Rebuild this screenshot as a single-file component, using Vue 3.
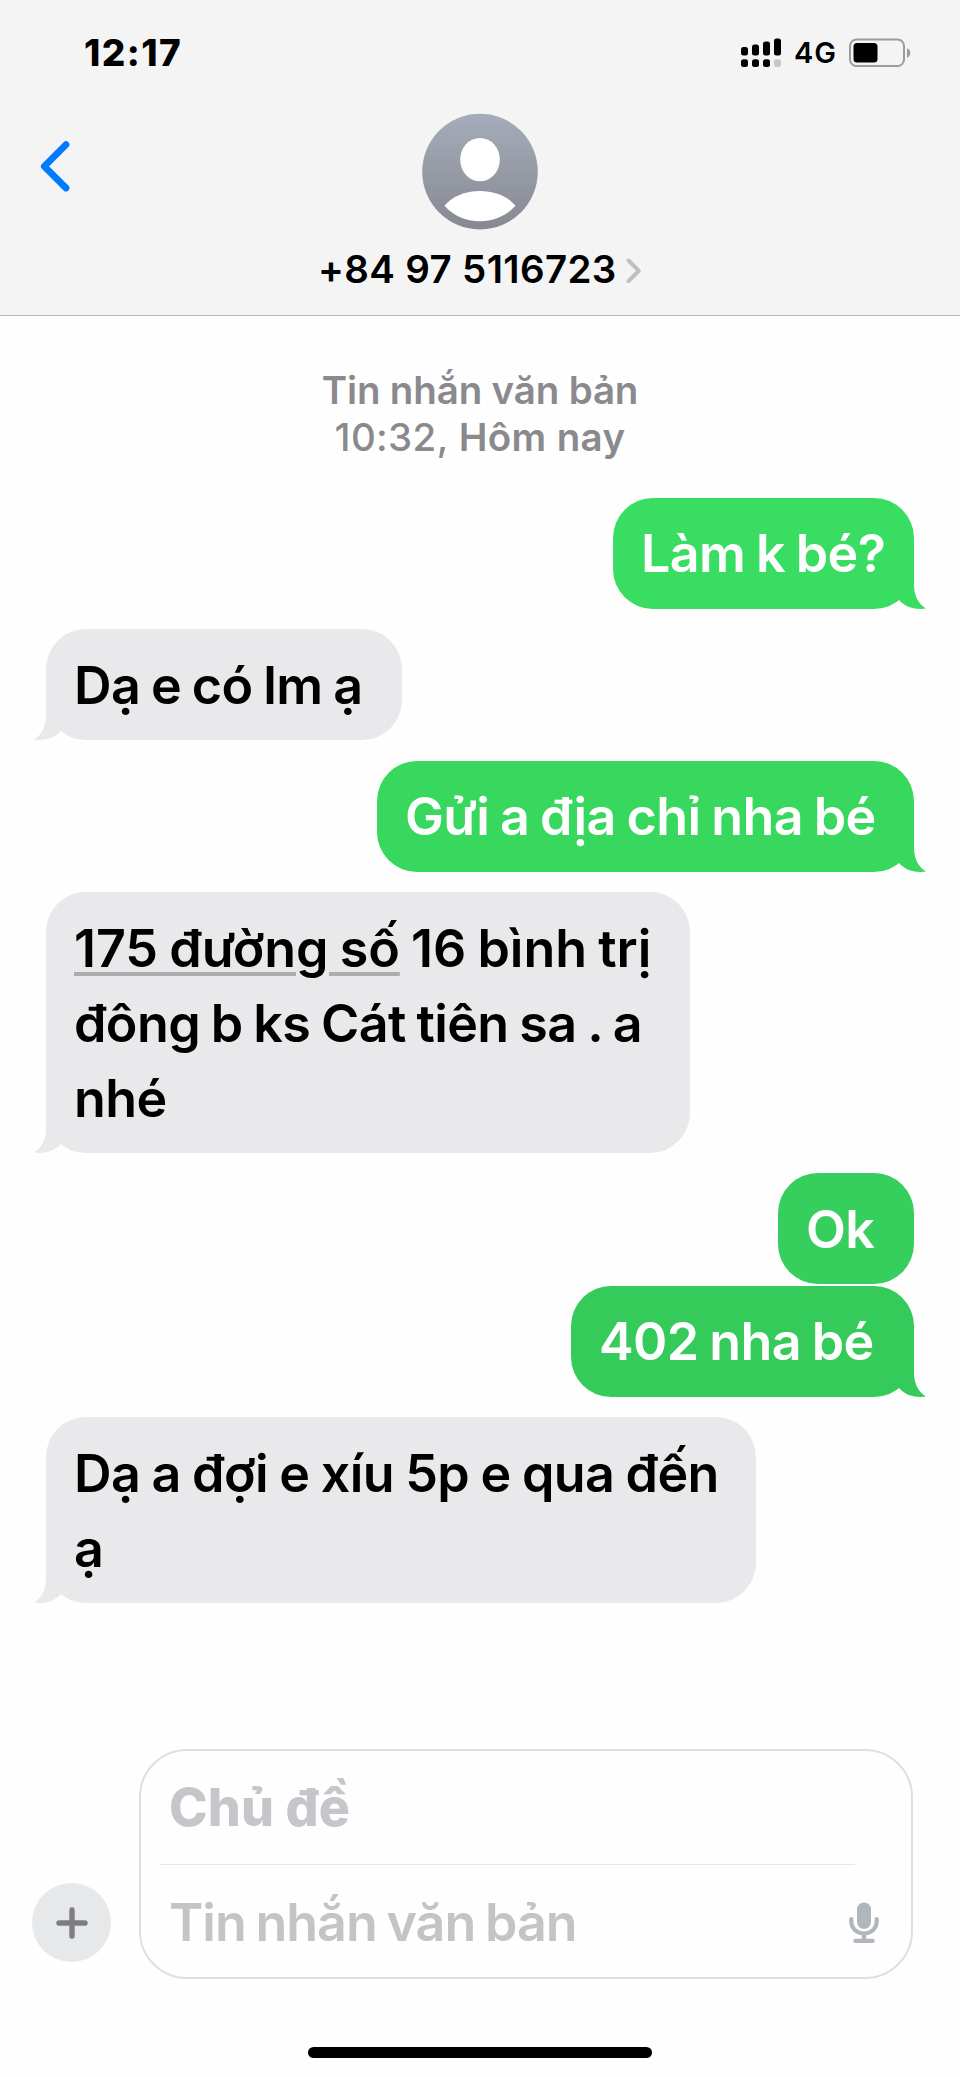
<script setup>
const messages = [
  { id: 1, side: 'out', tail: true, text: 'Làm k bé?' },
  { id: 2, side: 'in', tail: true, text: 'Dạ e có lm ạ' },
  { id: 3, side: 'out', tail: true, text: 'Gửi a địa chỉ nha bé' },
  { id: 4, side: 'in', tail: true, lines: ['đông b ks Cát tiên sa . a', 'nhé'] },
  { id: 5, side: 'out', tail: false, text: 'Ok' },
  { id: 6, side: 'out', tail: true, text: '402 nha bé' },
  { id: 7, side: 'in', tail: true, text: 'Dạ a đợi e xíu 5p e qua đến', lines: ['ạ'] },
]
</script>

<template>
  <div class="phone">
    <header class="header">
      <div class="status">
        <span class="time">12:17</span>
        <div class="status-right">
          <svg class="signal" width="40" height="30" viewBox="0 0 40 30">
            <rect x="0" y="9" width="7" height="8.5" rx="2.5" />
            <rect x="11" y="6.5" width="7" height="11" rx="2.5" />
            <rect x="22" y="3.5" width="7" height="14" rx="2.5" />
            <rect x="33" y="0.5" width="7" height="17" rx="2.5" />
            <rect x="0" y="21.3" width="7" height="7.6" rx="2.5" />
            <rect x="11" y="21.3" width="7" height="7.6" rx="2.5" />
            <rect x="22" y="21.3" width="7" height="7.6" rx="2.5" />
            <rect x="33" y="21.3" width="7" height="7.6" rx="2.5" fill="#c6c6c6" />
          </svg>
          <span class="network">4G</span>
          <svg class="battery" width="62" height="30" viewBox="0 0 62 30">
            <rect x="1" y="1.5" width="54" height="26.5" rx="6.5" fill="none" stroke="#9b9b9b" stroke-width="2" />
            <rect x="4.5" y="5" width="24" height="19.5" rx="3.5" />
            <path d="M58 10.2C60 11 61.3 12.7 61.3 15S60 19 58 19.8Z" fill="#9b9b9b" />
          </svg>
        </div>
      </div>
      <div class="nav">
        <svg class="back" width="32" height="52" viewBox="0 0 32 52">
          <path d="M27 4.6 5.3 26.3 27 48" fill="none" stroke="#007aff" stroke-width="6.8" stroke-linecap="round" stroke-linejoin="round" />
        </svg>
        <div class="contact">
          <svg class="avatar" width="116" height="116" viewBox="0 0 116 116">
            <defs>
              <linearGradient id="av" x1="0" y1="0" x2="0" y2="1">
                <stop offset="0" stop-color="#a5acba" />
                <stop offset="1" stop-color="#868991" />
              </linearGradient>
            </defs>
            <circle cx="58" cy="57.6" r="57.8" fill="url(#av)" />
            <ellipse cx="58" cy="45.6" rx="19.8" ry="21.7" fill="#fff" />
            <path d="M22.5 91.8C30 82.5 43 77 58 77S86 82.5 93.5 91.8C85 101.5 72 107.3 58 107.3S31 101.5 22.5 91.8Z" fill="#fff" />
          </svg>
          <div class="name">
            <span class="number">+84 97 5116723</span>
            <svg class="chev" width="16" height="26" viewBox="0 0 16 26">
              <path d="M2.5 2.5 12.8 12.8 2.5 23.1" fill="none" stroke="#bfbfc1" stroke-width="4" stroke-linecap="round" stroke-linejoin="round" />
            </svg>
          </div>
        </div>
      </div>
    </header>

    <main class="thread">
      <div class="stamp">
        <div class="stamp-kind">Tin nhắn văn bản</div>
        <div class="stamp-time"><span class="hour">10:32,</span> Hôm nay</div>
      </div>
      <div v-for="m in messages" :key="m.id" class="bubble" :class="[m.side, 'b' + m.id]">
        <div v-if="m.id === 4" class="line first"><span class="link">175 đường số</span> 16 bình trị</div>
        <div v-else class="line first">{{ m.text }}</div>
        <div v-for="l in m.lines" :key="l" class="line">{{ l }}</div>
        <svg v-if="m.tail" class="tail" width="40" height="50" viewBox="0 0 40 50">
          <path d="M28 0V26C28 37 33 45.5 40 49.5C31 51 20 49 13 41L5 20 10 0Z" fill="currentColor" />
        </svg>
      </div>
    </main>

    <footer class="composer">
      <div class="plus">
        <svg width="32" height="32" viewBox="0 0 32 32">
          <path d="M16 3V29M3 16H29" fill="none" stroke="#7c7d81" stroke-width="5.4" stroke-linecap="round" />
        </svg>
      </div>
      <div class="field">
        <div class="subject"><span class="subject-text">Chủ đề</span></div>
        <div class="body-row">
          <span class="body-text">Tin nhắn văn bản</span>
          <svg class="mic" width="30" height="42" viewBox="0 0 30 42">
            <rect x="8" y="0.5" width="14" height="26.5" rx="7" fill="#b0b6be" />
            <path d="M2.3 17V19C2.3 26.5 7.8 31.5 15 31.5S27.7 26.5 27.7 19V17M15 31.5V38.7M6.4 38.9H23.6" fill="none" stroke="#b0b6be" stroke-width="4.2" stroke-linecap="round" />
          </svg>
        </div>
      </div>
    </footer>
    <div class="home"></div>
  </div>
</template>

<style>
body { background: #fefefe; }
</style>

<style scoped>
.phone {
  box-sizing: border-box;
  width: 960px;
  height: 2077px;
  overflow: hidden;
  display: flex;
  flex-direction: column;
  background: #fefefe;
  color: #000;
  font-family: Inter, "Liberation Sans", sans-serif;
}
svg { display: block; flex: none; overflow: visible; }
span, .line, .stamp-kind, .stamp-time { white-space: pre; }
.header {
  box-sizing: border-box;
  flex: none;
  height: 316px;
  background: #f4f4f4;
  border-bottom: 1px solid #b9b9bb;
}
.status {
  display: flex;
  justify-content: space-between;
  align-items: center;
  height: 106px;
  padding: 0 49px 0 84px;
}
.time { margin-top: -2px; font-size: 37px; font-weight: 800; letter-spacing: 1.4px; }
.status-right { display: flex; align-items: center; }
.signal { margin-right: 13px; }
.network { width: 55px; font-size: 29px; font-weight: 600; line-height: 30px; letter-spacing: 1px; }
.battery { margin-top: -1px; }
.nav { display: flex; padding-left: 39px; }
.back { margin-top: 34px; }
.contact {
  width: 818px;
  display: flex;
  flex-direction: column;
  align-items: center;
  padding-top: 8px;
}
.name { display: flex; align-items: center; margin-top: 16px; height: 46px; }
.number { width: 308px; font-size: 38.5px; font-weight: 600; letter-spacing: 0.35px; }
.chev { margin-top: 3px; }
.thread {
  flex: none;
  height: 1433px;
  padding: 51px 46px 0;
  box-sizing: border-box;
  display: flex;
  flex-direction: column;
}
.stamp {
  height: 131px;
  text-align: center;
  color: #8a8a8e;
  font-size: 38.5px;
  font-weight: 600;
  line-height: 47px;
}
.stamp-kind { letter-spacing: -0.15px; }
.stamp-time { letter-spacing: 0.35px; }
.hour { font-weight: 500; }
.bubble {
  position: relative;
  box-sizing: border-box;
  flex: none;
  margin-bottom: 20.9px;
  padding: 18.3px 28px 17.3px;
  border-radius: 40px;
  font-size: 52px;
  font-weight: 600;
  letter-spacing: -0.6px;
  word-spacing: -1.8px;
}
.line { height: 75px; line-height: 75px; }
.out { align-self: flex-end; }
.out .line { color: #fff; }
.in { align-self: flex-start; background: #e9e9eb; color: #e9e9eb; }
.in .line { color: #000; }
.tail { position: absolute; right: -12px; bottom: 0; }
.in .tail { right: auto; left: -12px; transform: scaleX(-1); }
.link {
  text-decoration: underline;
  text-decoration-color: #adadaf;
  text-decoration-thickness: 4px;
  text-underline-offset: 5px;
}
.b1 { width: 301px; background: #39dd62; color: #39dd62; }
.b2 { width: 356px; }
.b3 { width: 537px; background: #38d75e; color: #38d75e; }
.b4 { width: 644px; margin-bottom: 20.3px; }
.b4 .first { letter-spacing: -0.05px; }
.b5 { width: 136px; margin-bottom: 2px; background: #36ce5c; color: #36ce5c; }
.b6 { width: 343px; background: #35cb5a; color: #35cb5a; }
.b7 { width: 710px; word-spacing: -1.2px; }
.composer { flex: none; display: flex; height: 230px; }
.plus {
  width: 79px;
  height: 79px;
  margin: 134px 28px 0 32px;
  border-radius: 50%;
  background: #e7e8ea;
  display: flex;
  align-items: center;
  justify-content: center;
}
.field {
  box-sizing: border-box;
  width: 774px;
  height: 230px;
  border: 2px solid #dfdfdf;
  border-radius: 48px;
  font-size: 52px;
}
.subject {
  height: 113px;
  margin: 0 56px 0 19px;
  padding-left: 9px;
  border-bottom: 1px solid #e6e6e6;
  line-height: 113px;
  font-weight: 800;
  color: #c6c5ca;
}
.subject-text { letter-spacing: 0.1px; }
.body-row { display: flex; padding-left: 28px; line-height: 116px; font-weight: 600; color: #c4c4c5; }
.body-text { width: 680px; letter-spacing: -1px; word-spacing: -2.4px; }
.mic { margin-top: 37px; }
.home { width: 344px; height: 11px; margin: 68px auto 0; border-radius: 6px; background: #000; }
</style>
